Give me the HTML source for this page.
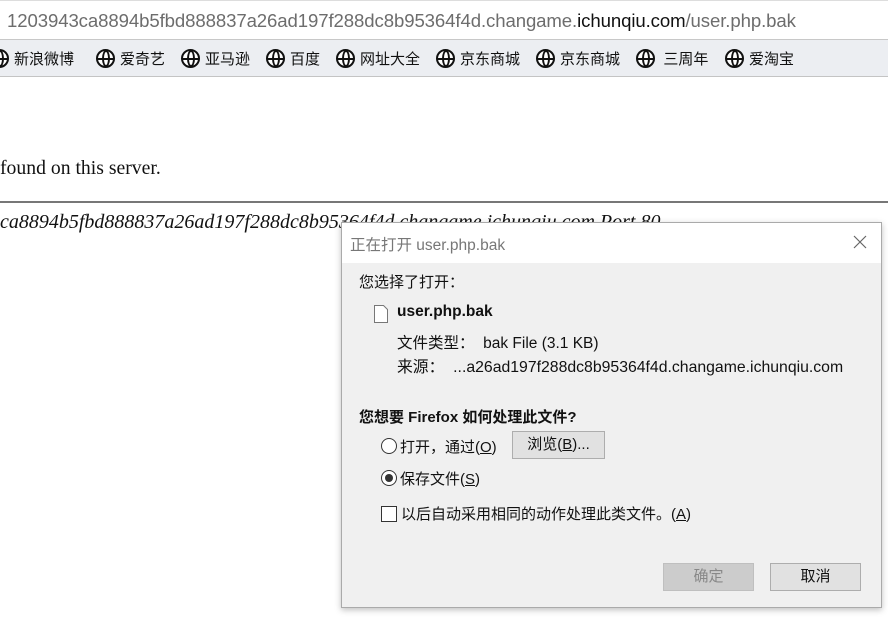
<!DOCTYPE html>
<html><head><meta charset="utf-8"><style>
*{margin:0;padding:0;box-sizing:border-box}
body{width:888px;height:621px;overflow:hidden;background:#fff;position:relative;font-family:"Liberation Sans","Noto Sans CJK SC",sans-serif}
.url{position:absolute;left:0;top:0;width:888px;height:40px;background:#fff;border-top:1px solid #ddd;border-bottom:1px solid #c8c8c8}
.url span{position:absolute;left:7px;top:9px;font-size:18.6px;color:#6d6d6d;white-space:nowrap;letter-spacing:-0.1px}
.url b{font-weight:normal;color:#111}
.bm{position:absolute;left:0;top:40px;width:888px;height:37px;background:#eceef2;border-bottom:1px solid #c4c4c4}
.bm .i{position:absolute;top:8px;font-size:15px;color:#111;white-space:nowrap;font-family:"Noto Sans CJK SC",sans-serif}
.g{display:inline-block;width:19px;height:19px;border:2px solid #111;border-radius:50%;vertical-align:-4px;margin-right:5px;position:relative;background:#fff}
.g:before{content:"";position:absolute;left:3.5px;top:-1px;width:8px;height:17px;border:2px solid #111;border-radius:50%;box-sizing:border-box}
.g:after{content:"";position:absolute;left:-1px;top:6.5px;width:17px;height:2px;background:#111}
.t1{position:absolute;left:0;top:157px;font-family:"Liberation Serif",serif;font-size:19.7px;color:#111}
.hr{position:absolute;left:0;top:201px;width:888px;height:2px;background:#777}
.t2{position:absolute;left:0;top:211px;font-family:"Liberation Serif",serif;font-style:italic;font-size:20px;color:#111;white-space:nowrap}
.dlg{position:absolute;left:341px;top:222px;width:541px;height:386px;background:#f0f0f0;border:1px solid #aaa;box-shadow:0 2px 6px rgba(0,0,0,.25);font-family:"Liberation Sans","Noto Sans CJK SC",sans-serif;font-size:15px;color:#111}
.tb{height:40px;background:#fff;position:relative}
.tb span{position:absolute;left:8px;top:10px;color:#777;font-size:15.5px}
.x{position:absolute;right:14px;top:12px;width:14px;height:14px}
.a{position:absolute;white-space:nowrap}
.rad{display:inline-block;width:16px;height:16px;border:1px solid #333;border-radius:50%;background:#fff;vertical-align:-2px;margin-right:3px;position:relative}
.rad.on:after{content:"";position:absolute;left:3px;top:3px;width:8px;height:8px;border-radius:50%;background:#333}
.chk{display:inline-block;width:16px;height:16px;border:1px solid #333;background:#fff;vertical-align:-3px;margin-right:4px}
.btn{position:absolute;border:1px solid #adadad;background:#e1e1e1;text-align:center;line-height:26px;font-size:15px}
u{text-decoration:underline}
</style></head><body>
<div class="url"><span>1203943ca8894b5fbd888837a26ad197f288dc8b95364f4d.changame.<b>ichunqiu.com</b>/user.php.bak</span></div>
<div class="bm">
<span class="i" style="left:-10px"><i class="g"></i>新浪微博</span>
<span class="i" style="left:96px"><i class="g"></i>爱奇艺</span>
<span class="i" style="left:181px"><i class="g"></i>亚马逊</span>
<span class="i" style="left:266px"><i class="g"></i>百度</span>
<span class="i" style="left:336px"><i class="g"></i>网址大全</span>
<span class="i" style="left:436px"><i class="g"></i>京东商城</span>
<span class="i" style="left:536px"><i class="g"></i>京东商城</span>
<span class="i" style="left:636px"><i class="g"></i>&nbsp;三周年</span>
<span class="i" style="left:725px"><i class="g"></i>爱淘宝</span>
</div>
<div class="t1">found on this server.</div>
<div class="hr"></div>
<div class="t2">ca8894b5fbd888837a26ad197f288dc8b95364f4d.changame.ichunqiu.com Port 80</div>
<div class="dlg">
<div class="tb"><span>正在打开 user.php.bak</span>
<svg class="x" viewBox="0 0 14 14"><path d="M1 1L13 13M13 1L1 13" stroke="#666" stroke-width="1.2"/></svg></div>
<div class="a" style="left:17px;top:48px">您选择了打开：</div>
<svg class="a" style="left:32px;top:82px" width="14" height="18" viewBox="0 0 14 18"><path d="M0.5 0.5H9.5L13.5 4.5V17.5H0.5Z" fill="#fff" stroke="#777"/></svg>
<div class="a" style="left:55px;top:80px;font-weight:bold;font-size:15.5px">user.php.bak</div>
<div class="a" style="left:55px;top:108px;font-size:15.5px">文件类型：&nbsp;&nbsp;bak File (3.1 KB)</div>
<div class="a" style="left:55px;top:131px;font-size:15.8px">来源：&nbsp;&nbsp;...a26ad197f288dc8b95364f4d.changame.ichunqiu.com</div>
<div class="a" style="left:17px;top:183px;font-weight:bold">您想要 Firefox 如何处理此文件?</div>
<div class="a" style="left:39px;top:213px"><i class="rad"></i>打开，通过(<u>O</u>)</div>
<div class="btn" style="left:170px;top:208px;width:93px;height:28px">浏览(<u>B</u>)...</div>
<div class="a" style="left:39px;top:245px"><i class="rad on"></i>保存文件(<u>S</u>)</div>
<div class="a" style="left:39px;top:280px"><i class="chk"></i>以后自动采用相同的动作处理此类文件。(<u>A</u>)</div>
<div class="btn" style="left:321px;top:340px;width:91px;height:28px;background:#cccccc;border-color:#bfbfbf;color:#888">确定</div>
<div class="btn" style="left:428px;top:340px;width:91px;height:28px">取消</div>
</div>
</body></html>
